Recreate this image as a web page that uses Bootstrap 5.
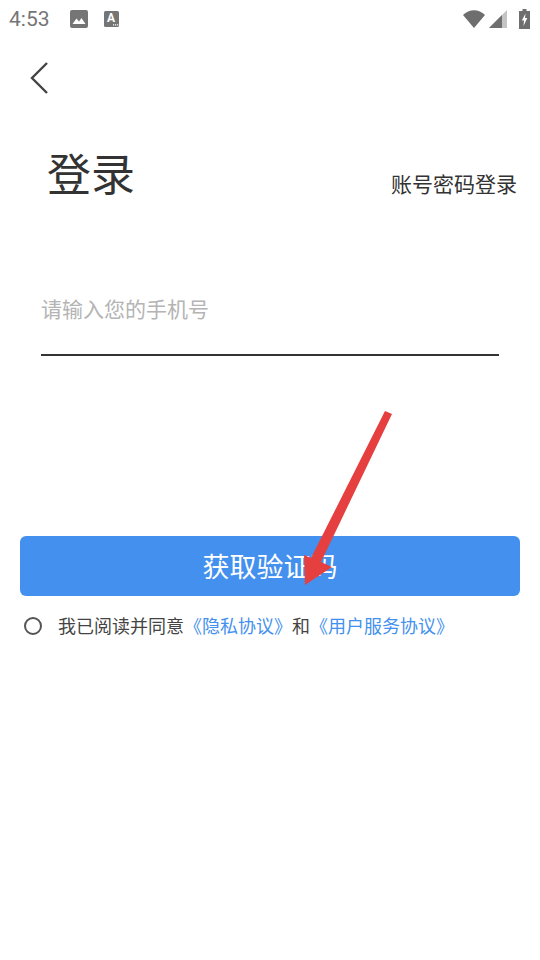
<!DOCTYPE html><html lang="zh-CN">
<head>
  <meta charset="UTF-8">
  <meta name="viewport" content="width=device-width, initial-scale=1.0">
  <title>登录</title>
  <link href="https://cdn.jsdelivr.net/npm/bootstrap@5.3.0/dist/css/bootstrap.min.css" rel="stylesheet">
  <style>
    body { background: #fff; font-family: "Noto Sans CJK SC", "Liberation Sans", sans-serif; color: #333; }
    .screen { width: 540px; height: 960px; position: relative; overflow: hidden; }
    .status-bar { height: 38px; padding: 0 10px 0 9px; color: #757575; }
    .status-time { font-family: Roboto, "Liberation Sans", sans-serif; font-size: 21px; width: 57px; line-height: 38px; }
    .back-row { height: 80px; padding-left: 29px; }
    .title-row { height: 76px; margin-top: 16px; padding: 0 23px 0 47px; }
    .login-title { font-size: 44px; line-height: 76px; color: #333; margin: 0; font-weight: 400; }
    .alt-login { font-size: 21px; line-height: 30px; color: #333; margin-top: 22px; }
    .phone-wrap { margin: 40px 41px 0; width: 458px; height: 106px; padding-top: 42px; border-bottom: 2px solid #333; }
    .phone-input { border: 0; outline: 0; padding: 0; width: 100%; font-size: 21px; line-height: 32px; height: 32px; font-family: inherit; }
    .phone-input::placeholder { color: #b4b4b4; opacity: 1; }
    .get-code { display: block; width: 500px; height: 60px; margin: 180px 20px 0; padding: 0; background: #4390ee; border: 0; border-radius: 6px; color: #fff; font-size: 27px; line-height: 60px; }
    .agree-row { margin-top: 13px; padding-left: 24px; height: 32px; font-size: 18px; line-height: 32px; color: #444; }
    .agree-circle { width: 18px; height: 18px; border: 2px solid #555; border-radius: 50%; margin-right: 16px; flex: none; position: relative; top: 1px; }
    .agree-row a { color: #4390ee; text-decoration: none; }
    .signal-gap { gap: 4px; }
    .red-arrow { position: absolute; left: 0; top: 0; pointer-events: none; }
  </style>
</head>
<body>
  <div class="screen">
    <div class="status-bar d-flex align-items-center">
      <div class="status-time">4:53</div>
      <svg class="ms-1" width="18" height="18" viewBox="0 0 18 18"><rect width="18" height="18" rx="2" fill="#757575"/><path d="M2.5 14 L6.5 8.5 L9 11.5 L11.5 8 L15.5 14 Z" fill="#fff"/></svg>
      <svg class="ms-3" width="15" height="16" viewBox="0 0 15 16"><rect width="15" height="16" rx="1.5" fill="#757575"/><text x="7" y="11" font-family="Roboto, sans-serif" font-size="12" font-weight="700" fill="#fff" text-anchor="middle">A</text><path d="M9 13.2h1.2v1.2H9zM11 13.2h1.2v1.2H11zM13 13.2h1.2v1.2H13z" fill="#fff"/></svg>
      <div class="ms-auto d-flex align-items-center signal-gap">
        <svg width="22" height="18" viewBox="0 0 22 18"><path d="M0 5 C6 -1.5 16 -1.5 22 5 L11 18 Z" fill="#6e6e6e"/></svg>
        <svg width="18" height="18" viewBox="0 0 18 18"><path d="M0 18 L18 0 V18 Z" fill="#c4c4c4"/><path d="M0 18 L13 5 V18 Z" fill="#6e6e6e"/></svg>
        <svg class="ms-2" width="11" height="20" viewBox="0 0 11 20"><path d="M3.5 0h4v2H11v18H0V2h3.5z" fill="#6e6e6e"/><path d="M6.5 4.5 L2.8 11.5 H5 L4.5 17 L8.3 9 H6 Z" fill="#fff"/></svg>
      </div>
    </div>
    <div class="back-row d-flex align-items-center">
      <svg width="22" height="34" viewBox="0 0 22 34"><path d="M18 2 L3 17 L18 32" fill="none" stroke="#444" stroke-width="2.4"/></svg>
    </div>
    <div class="title-row d-flex justify-content-between align-items-center">
      <h1 class="login-title">登录</h1>
      <div class="alt-login">账号密码登录</div>
    </div>
    <div class="phone-wrap">
      <input class="phone-input" type="text" placeholder="请输入您的手机号">
    </div>
    <button class="get-code" type="button">获取验证码</button>
    <div class="agree-row d-flex align-items-center">
      <span class="agree-circle"></span>
      <span>我已阅读并同意<a href="#">《隐私协议》</a>和<a href="#">《用户服务协议》</a></span>
    </div>
    <svg class="red-arrow" width="540" height="960" viewBox="0 0 540 960">
      <path d="M385 411 L392 414 L321 562 L332 567 L305 585 L304 555 L311 558 Z" fill="#e53f3f"/>
    </svg>
  </div>
  <script src="https://cdn.jsdelivr.net/npm/bootstrap@5.3.0/dist/js/bootstrap.bundle.min.js"></script>
</body>
</html>
